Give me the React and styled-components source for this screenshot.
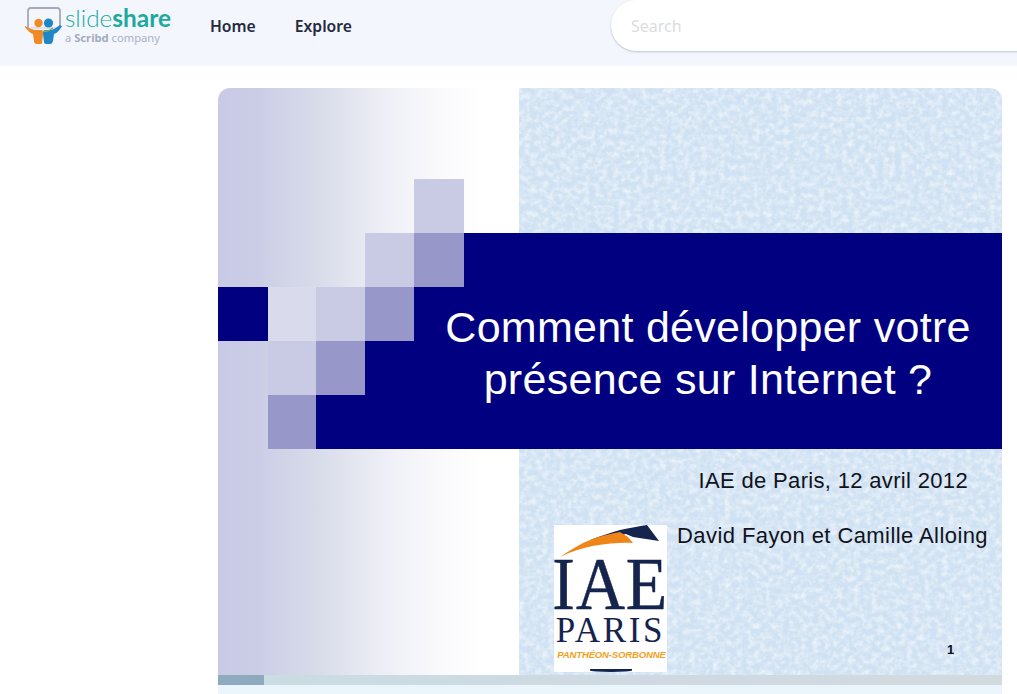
import React from 'react';
import styled, { createGlobalStyle } from 'styled-components';

const GlobalStyle = createGlobalStyle`
  html, body {
    margin: 0;
    padding: 0;
    background: #fff;
    overflow: hidden;
  }
`;

const LogoMark = () => (
  <svg width="40" height="46" viewBox="0 0 40 46">
    <path d="M4 29V11a3 3 0 0 1 3-3h26a3 3 0 0 1 3 3v17" fill="#f4f6fb" stroke="#a3a9b8" strokeWidth="1.8" />
    <path d="M7 28h26" stroke="#c8ccd8" strokeWidth="1" />
    <path d="M1 26c4 2 8 4 11 4h6c1 0 1 3 1 4l-1 9c0 1-1 1-2 1h-3c-2 0-3-1-3-3l-1-7c-3-1-6-4-8-7z" fill="#f08a24" />
    <path d="M36 25c-4 3-7 5-11 5h-4c-2 0-2 3-2 4l1 8c0 1 1 2 2 2h4c2 0 2-1 3-3l1-7c3-1 6-4 8-8z" fill="#1f87c7" />
    <path d="M19 31c3 1 6 0 10-3" fill="none" stroke="#8fb14a" strokeWidth="1.2" />
    <circle cx="14.5" cy="23" r="4.2" fill="#f08a24" />
    <circle cx="24.5" cy="23" r="4.6" fill="#1f87c7" />
  </svg>
);

const Paper = () => (
  <Texture width="100%" height="100%">
    <filter id="paper" x="0" y="0" width="100%" height="100%">
      <feTurbulence type="fractalNoise" baseFrequency="0.17" numOctaves="4" seed="11" />
      <feColorMatrix
        type="matrix"
        values="0 0 0 0 0.93  0 0 0 0 0.96  0 0 0 0 0.99  1.4 0 0 0 -0.5"
      />
    </filter>
    <rect width="100%" height="100%" fill="#cfe1f2" />
    <rect width="100%" height="100%" filter="url(#paper)" />
  </Texture>
);

const IaeLogo = () => (
  <LogoCard>
    <LogoSwoosh width="113" height="36" viewBox="0 0 113 36">
      <path d="M36 15C46 11 56 8 66 5C76 3 85 1 93 0l12 16-26-4-7-3z" fill="#14244d" />
      <path d="M6 32C16 25 26 19 36 15C46 11 56 9 66 7l8 5 5 6C60 17 30 20 6 32z" fill="#ef8519" />
    </LogoSwoosh>
    <LogoBig>IAE</LogoBig>
    <LogoCity>PARIS</LogoCity>
    <LogoSub>PANTHÉON-SORBONNE</LogoSub>
    <LogoFoot />
  </LogoCard>
);

const App = () => (
  <Page>
    <GlobalStyle />
    <Header>
      <Brand>
        <LogoMark />
        <BrandText>
          <BrandName>slide<b>share</b></BrandName>
          <BrandTag>a <b>Scribd</b> company</BrandTag>
        </BrandText>
      </Brand>
      <Nav>
        <NavLink>Home</NavLink>
        <NavLink>Explore</NavLink>
      </Nav>
      <SearchBox placeholder="Search" readOnly />
    </Header>

    <Main>
      <Slide>
        <Fade />
        <PaperPane><Paper /></PaperPane>

        <Mosaic>
          <Cell $col="5" $row="1" $tone="light" />
          <Cell $col="4" $row="2" $tone="light" />
          <Cell $col="5" $row="2" $tone="dark" />
          <Cell $col="6" $row="2" $tone="navy" />
          <Cell $col="1" $row="3" $tone="navy" />
          <Cell $col="2" $row="3" $tone="pale" />
          <Cell $col="3" $row="3" $tone="light" />
          <Cell $col="4" $row="3" $tone="dark" />
          <Cell $col="5 / 7" $row="3" $tone="navy" />
          <Cell $col="2" $row="4" $tone="light" />
          <Cell $col="3" $row="4" $tone="dark" />
          <Cell $col="4 / 7" $row="4" $tone="navy" />
          <Cell $col="2" $row="5" $tone="dark" />
          <Cell $col="3 / 7" $row="5" $tone="navy" />
        </Mosaic>

        <Title>Comment développer votre<br />présence sur Internet ?</Title>
        <Venue>IAE de Paris, 12 avril 2012</Venue>
        <Authors>David Fayon et Camille Alloing</Authors>
        <IaeLogo />
        <PageNumber>1</PageNumber>
      </Slide>
      <Progress>
        <ProgressFill />
      </Progress>
      <Below />
    </Main>
  </Page>
);

const Page = styled.div`
  width: 1017px;
  height: 694px;
  overflow: hidden;
  background: #fff;
  font-family: "Noto Sans", "Open Sans", sans-serif;
`;

const Header = styled.header`
  display: flex;
  align-items: flex-start;
  height: 66px;
  padding-left: 24px;
  background: #f3f6fc;
`;

const Brand = styled.div`
  display: flex;
  flex: none;
  align-items: flex-start;
  width: 186px;
  height: 50px;
`;

const BrandText = styled.div`
  display: flex;
  flex-direction: column;
  margin-left: 1px;
  padding-top: 5px;
`;

const BrandName = styled.div`
  color: #22a99f;
  font-family: Lato, "Noto Sans", sans-serif;
  font-size: 24.4px;
  font-weight: 300;
  line-height: 26px;

  b {
    color: #1da99e;
    font-weight: 700;
  }
`;

const BrandTag = styled.div`
  color: #aab1c6;
  font-size: 11.2px;
  line-height: 14px;

  b {
    font-weight: 700;
    color: #a3abc0;
  }
`;

const Nav = styled.nav`
  display: flex;
  flex: none;
  gap: 39px;
  align-items: center;
  width: 401px;
  height: 52px;
`;

const NavLink = styled.a`
  color: #252a3d;
  font-size: 15.7px;
  font-weight: 600;
`;

const SearchBox = styled.input`
  box-sizing: border-box;
  flex: none;
  width: 500px;
  height: 51px;
  padding: 0 20px;
  border: 0;
  border-radius: 26px;
  outline: 0;
  background: #fff;
  box-shadow: 0 1px 2px rgba(120, 135, 160, 0.45);
  font-family: inherit;
  font-size: 16px;

  &::placeholder {
    color: #dcdcdf;
  }
`;

const Main = styled.main`
  width: 784px;
  margin-left: 218px;
  padding-top: 22px;
`;

const Slide = styled.section`
  position: relative;
  display: grid;
  grid-template-columns: 301px 1fr;
  height: 587px;
  overflow: hidden;
  border-radius: 12px 12px 0 0;
  font-family: "Liberation Sans", Arial, sans-serif;
`;

const Fade = styled.div`
  background: linear-gradient(
    90deg,
    #c9cae6 0,
    #cbcde6 40px,
    #d0d3e7 60px,
    #d8dbe9 100px,
    #eeeff6 167px,
    #f9f9fc 217px,
    #fff 267px
  );
`;

const PaperPane = styled.div`
  position: relative;
`;

const Texture = styled.svg`
  display: block;
  position: absolute;
  inset: 0;
`;

const Mosaic = styled.div`
  position: absolute;
  top: 91px;
  left: 0;
  right: 0;
  display: grid;
  grid-template-columns: 50px 48px 49px 49px 50px 1fr;
  grid-template-rows: 54px 54px 54px 54px 54px;
`;

const tones = {
  navy: '#000080',
  dark: '#9798c9',
  light: '#c9cae4',
  pale: '#d9daeb',
};

const Cell = styled.div`
  grid-column: ${(p) => p.$col};
  grid-row: ${(p) => p.$row};
  background: ${(p) => tones[p.$tone]};
`;

const Title = styled.h1`
  position: absolute;
  top: 213px;
  left: 205px;
  width: 570px;
  margin: 0;
  color: #fff;
  font-size: 43px;
  font-weight: 400;
  line-height: 52px;
  letter-spacing: 0.28px;
  text-align: center;
`;

const Venue = styled.div`
  position: absolute;
  top: 379px;
  right: 34px;
  color: #10131c;
  font-size: 22px;
  line-height: 28px;
  letter-spacing: 0.33px;
`;

const Authors = styled.div`
  position: absolute;
  top: 434px;
  right: 14px;
  color: #10131c;
  font-size: 22px;
  line-height: 28px;
  letter-spacing: 0.42px;
`;

const PageNumber = styled.div`
  position: absolute;
  top: 554px;
  left: 729px;
  color: #0c0f1a;
  font-size: 13px;
  font-weight: 700;
  line-height: 16px;
`;

const LogoCard = styled.div`
  position: absolute;
  top: 437px;
  left: 336px;
  display: flex;
  flex-direction: column;
  align-items: center;
  width: 113px;
  height: 147px;
  overflow: hidden;
  background: #fff;
  color: #14244d;
  font-family: "Liberation Serif", "Times New Roman", serif;
`;

const LogoSwoosh = styled.svg`
  flex: none;
`;

const LogoBig = styled.div`
  margin-top: -4px;
  font-size: 73px;
  line-height: 56px;
  letter-spacing: 1px;
  -webkit-text-stroke: 0.5px #14244d;
  transform: scaleX(0.93);
  white-space: nowrap;
`;

const LogoCity = styled.div`
  margin-top: 1px;
  font-size: 35px;
  line-height: 34px;
  letter-spacing: 2.7px;
  white-space: nowrap;
`;

const LogoSub = styled.div`
  margin-top: 1px;
  padding-left: 2px;
  color: #f0a21e;
  font-family: "Liberation Sans", Arial, sans-serif;
  font-size: 9.6px;
  font-style: italic;
  font-weight: 700;
  line-height: 12px;
  letter-spacing: -0.2px;
  white-space: nowrap;
`;

const LogoFoot = styled.div`
  flex: none;
  width: 42px;
  height: 3px;
  margin-top: 8px;
  border-radius: 0 0 50% 50%;
  background: #14244d;
`;

const Progress = styled.div`
  display: flex;
  height: 10px;
  background: linear-gradient(90deg, #c9dde2, #d0d8e2 60%, #d3dade);
`;

const ProgressFill = styled.div`
  width: 46px;
  background: #8fa9bf;
`;

const Below = styled.div`
  height: 20px;
  background: #eaf6fc;
`;

export default App;
